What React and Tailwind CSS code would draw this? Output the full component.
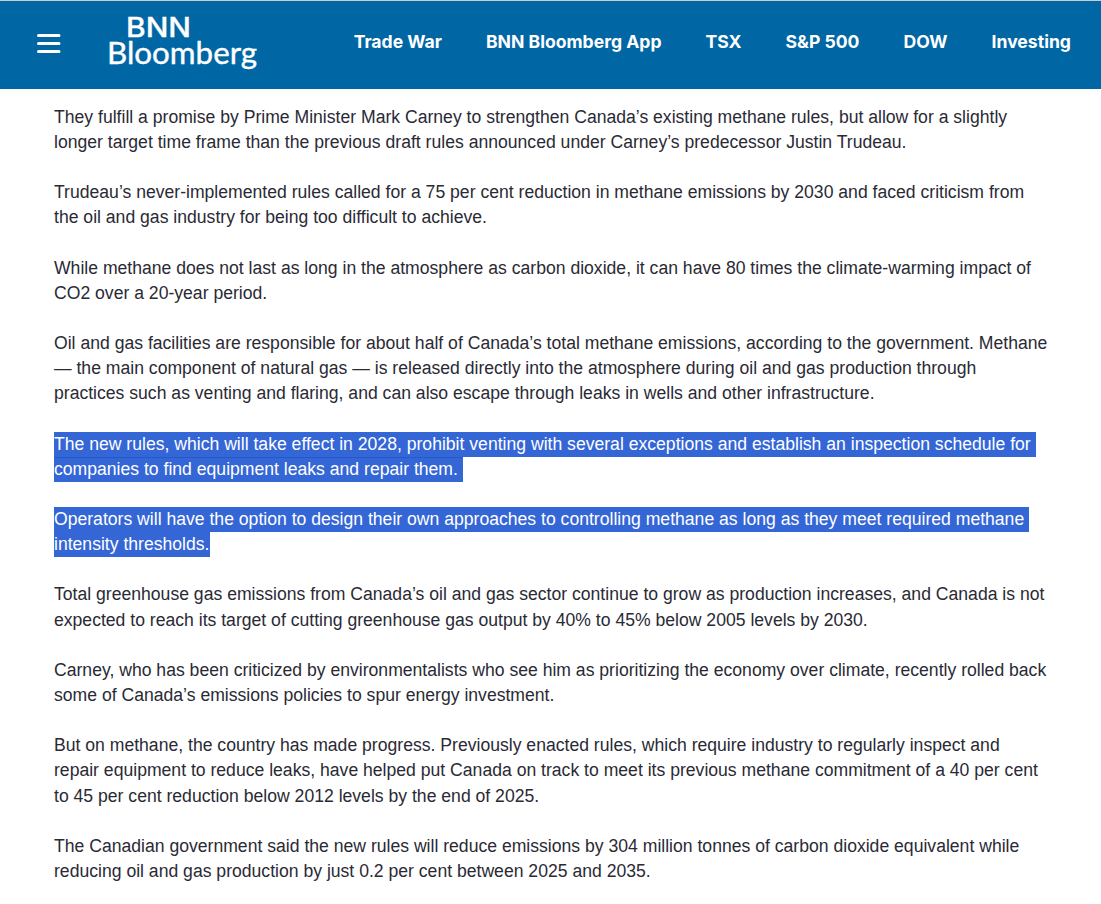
const navItems = ["Trade War", "BNN Bloomberg App", "TSX", "S&P 500", "DOW", "Investing"];

const before = [
  "They fulfill a promise by Prime Minister Mark Carney to strengthen Canada’s existing methane rules, but allow for a slightly longer target time frame than the previous draft rules announced under Carney’s predecessor Justin Trudeau.",
  "Trudeau’s never-implemented rules called for a 75 per cent reduction in methane emissions by 2030 and faced criticism from the oil and gas industry for being too difficult to achieve.",
  "While methane does not last as long in the atmosphere as carbon dioxide, it can have 80 times the climate-warming impact of CO2 over a 20-year period.",
  "Oil and gas facilities are responsible for about half of Canada’s total methane emissions, according to the government. Methane — the main component of natural gas — is released directly into the atmosphere during oil and gas production through practices such as venting and flaring, and can also escape through leaks in wells and other infrastructure.",
];

// highlighted text is split by line, the selection runs over the trailing space
const after = [
  "Total greenhouse gas emissions from Canada’s oil and gas sector continue to grow as production increases, and Canada is not expected to reach its target of cutting greenhouse gas output by 40% to 45% below 2005 levels by 2030.",
  "Carney, who has been criticized by environmentalists who see him as prioritizing the economy over climate, recently rolled back some of Canada’s emissions policies to spur energy investment.",
  "But on methane, the country has made progress. Previously enacted rules, which require industry to regularly inspect and repair equipment to reduce leaks, have helped put Canada on track to meet its previous methane commitment of a 40 per cent to 45 per cent reduction below 2012 levels by the end of 2025.",
  "The Canadian government said the new rules will reduce emissions by 304 million tonnes of carbon dioxide equivalent while reducing oil and gas production by just 0.2 per cent between 2025 and 2035.",
];

function Logo() {
  return (
    <svg width="150" height="70" viewBox="0 0 150 70" className="ml-[46px] mt-[4px] shrink-0" fill="white">
      <text x="19" y="32" fontFamily="Inter, sans-serif" fontSize="26.5" fontWeight="500" stroke="white" strokeWidth="0.3" textLength="65" lengthAdjust="spacingAndGlyphs">BNN</text>
      <text x="0" y="58.5" fontFamily="Lato, sans-serif" fontSize="30.5" stroke="white" strokeWidth="0.4" textLength="150" lengthAdjust="spacingAndGlyphs">Bloomberg</text>
    </svg>
  );
}

function Header() {
  return (
    <header className="flex h-[89px] items-start border-t border-t-[#c9ccce] bg-[#0066a4] text-white">
      <svg width="24" height="21" viewBox="0 0 24 21" className="ml-[37px] mt-[32px] shrink-0" fill="none" stroke="white" strokeWidth="3" strokeLinecap="round">
        <path d="M1.5 2.5h20.5M1.5 10.5h20.5M1.5 18.5h20.5" />
      </svg>
      <Logo />
      <nav className="ml-auto mr-[30px] mt-[30px] flex gap-[44px] font-['Inter',sans-serif] text-[17.6px] font-bold leading-[22px]">
        {navItems.map((item) => (
          <a key={item} className="whitespace-nowrap">{item}</a>
        ))}
      </nav>
    </header>
  );
}

export default function App() {
  return (
    <div className="h-screen overflow-hidden bg-white">
      <Header />
      <main className="pl-[54px] pr-[52px] pt-[15.9px] font-['Liberation_Sans',Arial,sans-serif] text-[17.6px] leading-[25.14px] text-[#2a2a35]">
        {before.map((p, i) => (
          <p key={i} className="mb-[25.14px]">{p}</p>
        ))}
        <p className="mb-[25.14px]">
          <span className="block w-fit whitespace-pre bg-[#3566d6] text-white">The new rules, which will take effect in 2028, prohibit venting with several exceptions and establish an inspection schedule for </span>
          <span className="block w-fit whitespace-pre bg-[#3566d6] text-white shadow-[inset_0_1px_0_#2259d0]">companies to find equipment leaks and repair them. </span>
        </p>
        <p className="mb-[25.14px]">
          <span className="block w-fit whitespace-pre bg-[#3566d6] text-white">Operators will have the option to design their own approaches to controlling methane as long as they meet required methane </span>
          <span className="block w-fit whitespace-pre bg-[#3566d6] text-white">intensity thresholds.</span>
        </p>
        {after.map((p, i) => (
          <p key={i} className="mb-[25.14px]">{p}</p>
        ))}
      </main>
    </div>
  );
}
